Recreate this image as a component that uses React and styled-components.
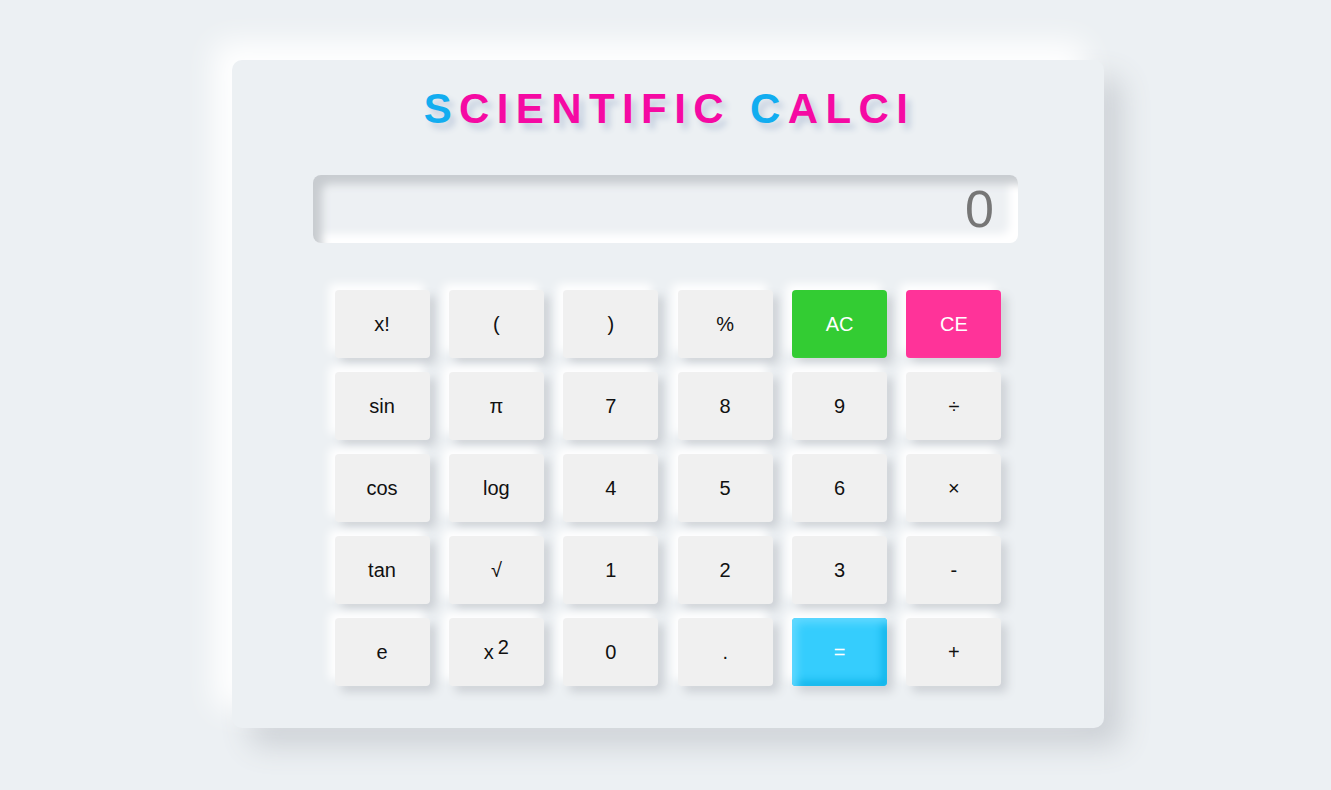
import React from "react";
import styled, { createGlobalStyle, css } from "styled-components";

const Global = createGlobalStyle`
  html, body { margin: 0; padding: 0; background: #ecf0f3; }
  body { font-family: "Liberation Sans", Arial, sans-serif; }
`;

const Page = styled.div`
  min-height: 790px;
  display: flex;
  justify-content: center;
  align-items: flex-start;
  padding: 60px 0 0 5px;
  box-sizing: border-box;
`;

const Card = styled.div`
  width: 872px;
  height: 668px;
  box-sizing: border-box;
  background: #ecf0f3;
  border-radius: 10px;
  padding-top: 24px;
  box-shadow: -18px -18px 30px #ffffff, 18px 18px 30px #cdd1d6;
  display: flex;
  flex-direction: column;
`;

const Title = styled.h1`
  margin: 0;
  text-align: center;
  font-size: 42px;
  line-height: 50px;
  font-weight: bold;
  letter-spacing: 7.4px;
  padding-left: 3px;
  color: #f50aa3;
  text-shadow: 5px 6px 6px #c4cfdf;
`;

const Blue = styled.span`
  color: #12adf0;
`;

const Display = styled.div`
  margin: 41px 0 0 81px;
  width: 705px;
  height: 68px;
  box-sizing: border-box;
  border-radius: 8px;
  background: #edf0f3;
  box-shadow: inset 9px 9px 9px #c8ccd0, inset -9px -9px 9px #ffffff;
  display: flex;
  align-items: center;
  justify-content: flex-end;
  padding-right: 24px;
  font-size: 52px;
  color: #767676;
`;

const Grid = styled.div`
  margin: 47px auto 0;
  display: grid;
  grid-template-columns: repeat(6, 95px);
  grid-auto-rows: 68px;
  column-gap: 19.4px;
  row-gap: 14px;
  width: 667px;
`;

const variants = {
  plain: css`
    background: #f0f0f0;
    color: #111;
    box-shadow: -6px -6px 10px #ffffff, 6px 6px 10px #cdd1d6;
  `,
  green: css`
    background: #33cc33;
    color: #fff;
    box-shadow: -6px -6px 10px #ffffff, 6px 6px 10px #cdd1d6;
  `,
  pink: css`
    background: #ff3399;
    color: #fff;
    box-shadow: -6px -6px 10px #ffffff, 6px 6px 10px #cdd1d6;
  `,
  blue: css`
    background: #35cdfd;
    color: #fff;
    box-shadow: inset 5px 5px 8px #62d9ff, inset -5px -5px 8px #10b4ea,
      -6px -6px 10px #ffffff, 6px 6px 10px #cdd1d6;
  `,
};

const Key = styled.button`
  border: none;
  border-radius: 4px;
  font-family: "Liberation Sans", Arial, sans-serif;
  font-size: 20px;
  display: flex;
  align-items: center;
  justify-content: center;
  padding: 0;
  cursor: pointer;
  ${(p) => variants[p.$variant || "plain"]}
`;

const Sup = styled.sup`
  font-size: 20px;
  position: relative;
  top: -5px;
  margin-left: 4px;
`;

const keys = [
  ["x!"], ["("], [")"], ["%"], ["AC", "green"], ["CE", "pink"],
  ["sin"], ["π"], ["7"], ["8"], ["9"], ["÷"],
  ["cos"], ["log"], ["4"], ["5"], ["6"], ["×"],
  ["tan"], ["√"], ["1"], ["2"], ["3"], ["-"],
  ["e"], ["x2"], ["0"], ["."], ["=", "blue"], ["+"],
];

export default function App() {
  return (
    <>
      <Global />
      <Page>
        <Card>
          <Title>
            <Blue>S</Blue>CIENTIFIC <Blue>C</Blue>ALCI
          </Title>
          <Display>0</Display>
          <Grid>
            {keys.map(([label, v], i) => (
              <Key key={i} $variant={v}>
                {label === "x2" ? (
                  <>
                    x<Sup>2</Sup>
                  </>
                ) : (
                  label
                )}
              </Key>
            ))}
          </Grid>
        </Card>
      </Page>
    </>
  );
}
